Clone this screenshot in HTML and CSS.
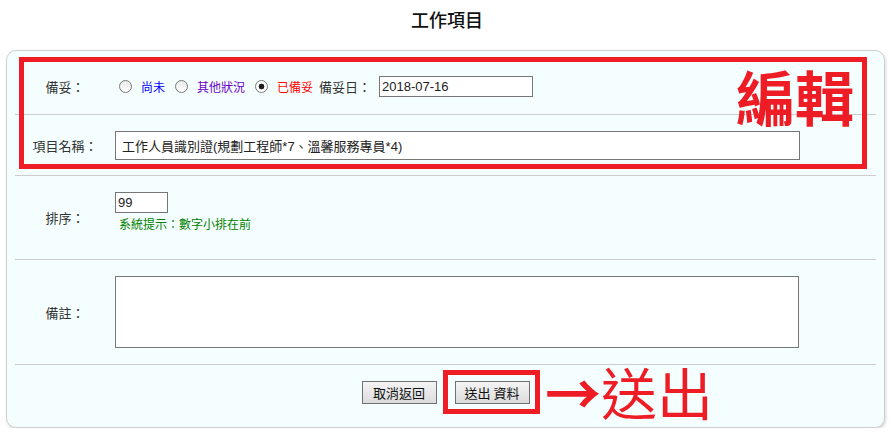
FILE: index.html
```html
<!DOCTYPE html>
<html lang="zh-Hant">

<head>
    <meta charset="UTF-8">
    <meta name="viewport" content="width=device-width, initial-scale=1.0">
    <title>工作項目</title>
    <link rel="stylesheet" href="styles.css">
</head>

<body>
    <h1 class="page-title">工作項目</h1>

    <div class="panel">
        <div class="form-row row-ready">
            <div class="label">備妥：</div>
            <div class="field">
                <label class="choice"><input type="radio" name="ready"><span class="c-blue">尚未</span></label>
                <label class="choice"><input type="radio" name="ready"><span class="c-purple">其他狀況</span></label>
                <label class="choice"><input type="radio" name="ready" checked><span class="c-red">已備妥</span></label>
                <span class="date-label">備妥日：</span>
                <input type="text" class="text-input date-input" value="2018-07-16">
            </div>
        </div>

        <div class="form-row row-name">
            <div class="label">項目名稱：</div>
            <div class="field">
                <input type="text" class="text-input name-input" value="工作人員識別證(規劃工程師*7、溫馨服務專員*4)">
            </div>
        </div>

        <div class="form-row row-sort">
            <div class="label">排序：</div>
            <div class="field field-stack">
                <input type="text" class="text-input sort-input" value="99">
                <div class="hint">系統提示：數字小排在前</div>
            </div>
        </div>

        <div class="form-row row-note">
            <div class="label">備註：</div>
            <div class="field field-stack">
                <textarea class="note-input"></textarea>
            </div>
        </div>

        <div class="actions">
            <button type="button" class="btn">取消返回</button>
            <button type="button" class="btn">送出 資料</button>
        </div>

        <!-- annotations -->
        <div class="mark mark-edit"></div>
        <div class="mark-text edit-text">編輯</div>
        <div class="mark mark-submit"></div>
        <div class="mark-text submit-text"><span class="arrow">→</span>送出</div>
    </div>
</body>

</html>
```

FILE: styles.css
```css
body {
    margin: 0;
    font-family: "Noto Sans CJK TC", sans-serif;
    font-size: 13px;
    color: #333;
    background-color: #fff;
}

.page-title {
    margin: 7px 0 19px;
    font-size: 18px;
    line-height: 24px;
    font-weight: 500;
    text-align: center;
    color: #111;
}

.panel {
    position: relative;
    margin: 0 9px 0 6px;
    padding: 7px 8px 8px;
    background-color: #f5fefe;
    border: 1px solid #cfcfcf;
    border-radius: 10px;
    box-shadow: 1px 2px 3px rgba(0, 0, 0, 0.15);
}

.form-row {
    display: grid;
    grid-template-columns: 100px 1fr;
    border-bottom: 1px solid #ccc;
}

.row-ready {
    height: 56px;
}

.row-name {
    height: 60px;
}

.row-sort {
    height: 83px;
}

.row-note {
    height: 104px;
}

.label {
    display: flex;
    align-items: center;
    justify-content: center;
    color: #333;
}

.field {
    display: flex;
    align-items: center;
}

.field-stack {
    flex-direction: column;
    align-items: flex-start;
    padding-top: 16px;
}

.choice {
    display: inline-flex;
    align-items: center;
    font-size: 12px;
    margin-right: 6px;
}

.choice input {
    appearance: none;
    width: 13px;
    height: 13px;
    margin: 0 9px 0 4px;
    border: 1px solid #7a7a7a;
    border-radius: 50%;
    background: linear-gradient(#eaeaea, #fff);
}

.choice input:checked {
    background: radial-gradient(circle, #1e1e1e 0 2.6px, #fff 3.2px);
}

.c-blue {
    color: #0000ff;
}

.c-purple {
    color: #6a00c8;
}

.c-red {
    color: #ff0000;
}

.choice:nth-child(3) {
    margin-right: 6px;
}

.date-label {
    margin-right: 8px;
}

.text-input,
.note-input {
    box-sizing: border-box;
    margin: 0;
    padding: 0 2px;
    border: 1px solid #767676;
    background-color: #fff;
    font-family: "Liberation Sans", "Noto Sans CJK TC", sans-serif;
    font-size: 13px;
    color: #222;
}

.date-input {
    width: 154px;
    height: 21px;
}

.name-input {
    width: 685px;
    height: 29px;
    padding: 0 6px;
}

.sort-input {
    width: 53px;
    height: 21px;
}

.note-input {
    width: 684px;
    height: 72px;
    resize: none;
}

.hint {
    margin-top: 3px;
    padding-left: 4px;
    font-size: 12px;
    line-height: 16px;
    color: #008000;
}

.actions {
    display: flex;
    justify-content: center;
    align-items: center;
    gap: 18px;
    height: 54px;
}

.btn {
    width: 75px;
    height: 23px;
    padding: 0;
    border: 1px solid #707070;
    background: linear-gradient(#f4f4f4, #dcdcdc);
    font-family: "Noto Sans CJK TC", sans-serif;
    font-size: 13px;
    color: #111;
}

.mark {
    position: absolute;
    box-sizing: border-box;
    border: 5px solid #ee1d25;
}

.mark-edit {
    left: 12px;
    top: 6px;
    width: 848px;
    height: 112px;
}

.mark-submit {
    left: 436px;
    top: 319px;
    width: 97px;
    height: 44px;
}

.mark-text {
    position: absolute;
    line-height: 1;
    color: #ee1d25;
    white-space: nowrap;
}

.edit-text {
    left: 729px;
    top: 15px;
    font-size: 59px;
    font-weight: bold;
}

.submit-text {
    left: 538px;
    top: 312px;
    font-size: 56px;
    font-weight: 400;
}

.arrow {
    font-weight: bold;
}
```
